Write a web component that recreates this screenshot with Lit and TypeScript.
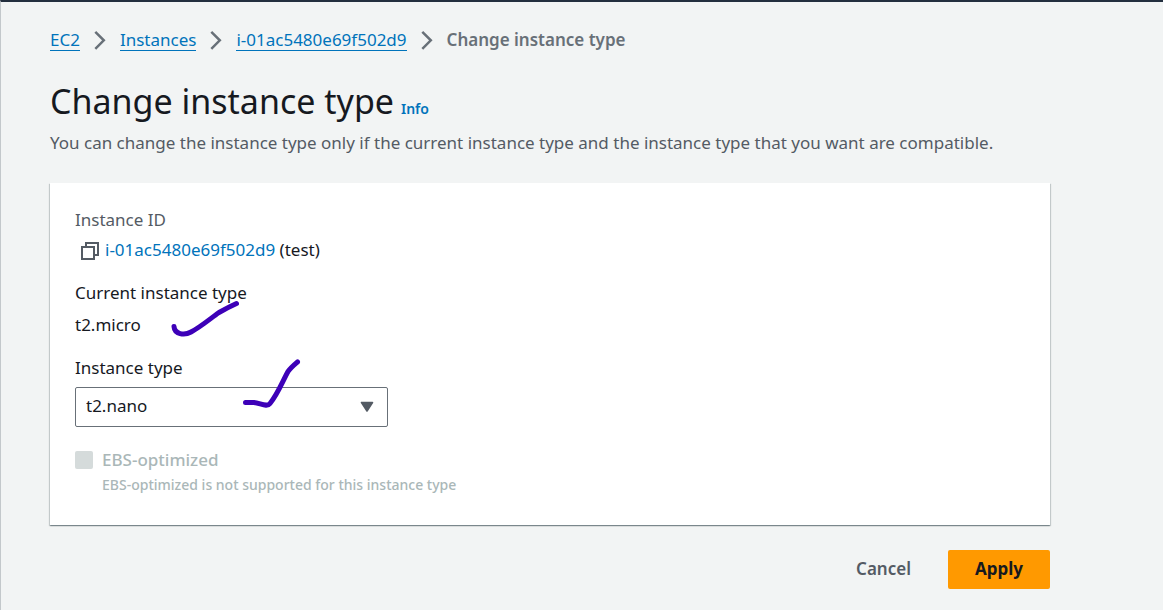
import { LitElement, html, css } from "lit";
import { customElement, state } from "lit/decorators.js";

const chevron = html`<svg class="chevron" viewBox="0 0 12 20" aria-hidden="true">
  <path d="M1.300 1.800L9.800 10.300L1.300 18.800" fill="none" stroke="currentColor" stroke-width="2.500" />
</svg>`;

@customElement("app-root")
export class AppRoot extends LitElement {
  static styles = css`
    :host {
      display: block;
      box-sizing: border-box;
      min-height: 100vh;
      padding: 26px 49px 20px;
      border-top: 2px solid #232f3e;
      border-left: 1px solid #c3c8cb;
      background: #f2f4f4;
      color: #16191f;
      font-family: "Noto Sans", "Open Sans", sans-serif;
      font-size: 17px;
      line-height: 24px;
    }
    main {
      max-width: 1000px;
    }
    a {
      color: #0073bb;
      text-decoration: none;
    }
    .crumbs {
      display: flex;
      align-items: center;
      gap: 14px;
      margin: 0;
      padding: 0;
      list-style: none;
    }
    .crumbs li {
      display: flex;
      align-items: center;
      gap: 14px;
    }
    .crumbs a {
      line-height: 21px;
      border-bottom: 1px solid #0073bb;
    }
    .chevron {
      width: 12px;
      height: 20px;
      color: #687078;
    }
    .current {
      color: #687078;
      font-weight: 600;
    }
    .heading {
      display: flex;
      align-items: baseline;
      gap: 7px;
      margin-top: 25px;
    }
    h1 {
      margin: 0;
      font-size: 34px;
      font-weight: 400;
      line-height: 48px;
    }
    .info {
      font-size: 14px;
      font-weight: 600;
    }
    .intro {
      margin: 6px 0 0;
      color: #545b64;
    }
    .card {
      position: relative;
      margin-top: 28px;
      padding: 25px 25px 28px;
      background: #fff;
      box-shadow: 0 1px 1px 0 rgba(0, 28, 36, 0.3), 1px 1px 1px 0 rgba(0, 28, 36, 0.15),
        -1px 1px 1px 0 rgba(0, 28, 36, 0.15);
    }
    .muted {
      color: #545b64;
    }
    .id-row {
      display: flex;
      align-items: center;
      gap: 5px;
      margin-top: 6px;
    }
    .copy {
      display: flex;
      padding: 2px 0 0 6px;
      border: 0;
      background: none;
      color: #545b64;
    }
    .copy svg {
      width: 19px;
      height: 18px;
    }
    .group {
      margin-top: 19px;
    }
    .value {
      margin-top: 8px;
    }
    .select {
      display: grid;
      max-width: 313px;
      margin-top: 7px;
      align-items: center;
    }
    .select > * {
      grid-area: 1 / 1;
    }
    select {
      appearance: none;
      width: 100%;
      height: 40px;
      padding: 0 40px 2px 10px;
      border: 1px solid #687078;
      border-radius: 2px;
      background: #fff;
      color: inherit;
      font: inherit;
    }
    .arrow {
      justify-self: end;
      width: 14px;
      height: 12px;
      margin-right: 14px;
      pointer-events: none;
    }
    .option {
      display: grid;
      grid-template-columns: 18px 1fr;
      column-gap: 9px;
      align-items: center;
      margin-top: 21px;
      color: #aab7b8;
    }
    .option input {
      appearance: none;
      width: 18px;
      height: 18px;
      margin: 0;
      border-radius: 2px;
      background: #d5dbdb;
    }
    .option label {
      font-weight: 500;
    }
    .hint {
      grid-column: 2;
      margin: 1px 0 0;
      font-size: 14px;
      font-weight: 500;
    }
    .ink {
      position: absolute;
      left: 120px;
      top: 112px;
      width: 140px;
      height: 120px;
      pointer-events: none;
    }
    .actions {
      display: flex;
      justify-content: flex-end;
      gap: 10px;
      margin-top: 25px;
    }
    .actions button {
      height: 39px;
      padding: 0 27px 1px;
      border: 0;
      border-radius: 2px;
      background: none;
      color: #545b64;
      font: inherit;
      font-weight: 600;
    }
    .actions .primary {
      background: #ff9900;
      color: #16191f;
      font-weight: 700;
    }
  `;

  @state() private instanceType = "t2.nano";

  private onType(e: Event) {
    this.instanceType = (e.target as HTMLSelectElement).value;
  }

  render() {
    return html`<main>
      <nav aria-label="Breadcrumbs">
        <ol class="crumbs">
          <li><a href="#">EC2</a>${chevron}</li>
          <li><a href="#">Instances</a>${chevron}</li>
          <li><a href="#">i-01ac5480e69f502d9</a>${chevron}</li>
          <li class="current">Change instance type</li>
        </ol>
      </nav>
      <div class="heading">
        <h1>Change instance type</h1>
        <a class="info" href="#">Info</a>
      </div>
      <p class="intro">
        You can change the instance type only if the current instance type and the instance type that you want are compatible.
      </p>
      <section class="card">
        <div class="muted">Instance ID</div>
        <div class="id-row">
          <button class="copy" type="button" aria-label="Copy">
            <svg viewBox="0 0 19 18" fill="none" stroke="currentColor" stroke-width="2">
              <path d="M1 5H13V17H1Z M5 5V1H17V13H13" />
            </svg>
          </button>
          <span><a href="#">i-01ac5480e69f502d9</a> (test)</span>
        </div>
        <div class="group">
          <div>Current instance type</div>
          <div class="value">t2.micro</div>
        </div>
        <div class="group">
          <label for="type">Instance type</label>
          <div class="select">
            <select id="type" .value=${this.instanceType} @change=${this.onType}>
              <option>t2.nano</option>
            </select>
            <svg class="arrow" viewBox="0 0 14 12" aria-hidden="true">
              <path d="M1.500 1.500H12.500L7 10Z" fill="#545b64" stroke="#545b64" stroke-width="1.600" stroke-linejoin="round" />
            </svg>
          </div>
        </div>
        <div class="option">
          <input id="ebs" type="checkbox" disabled aria-describedby="ebs-hint" />
          <label for="ebs">EBS-optimized</label>
          <p class="hint" id="ebs-hint">EBS-optimized is not supported for this instance type</p>
        </div>
        <svg class="ink" viewBox="170 295 140 120" aria-hidden="true" fill="none" stroke="#3d00b8" stroke-width="5" stroke-linecap="round" stroke-linejoin="round">
          <path d="M174 326.500C174.500 334 184 336 191 332C202 326 211 318 219 312.500C226 308.500 231 306 236.500 303.500" />
          <path d="M245.500 402.500H254C260 403 267 407.500 270 403.500C278 393.500 282.500 381.500 288 371.500C291 367.500 294 365 297.500 362" />
        </svg>
      </section>
      <div class="actions">
        <button type="button">Cancel</button>
        <button class="primary" type="button">Apply</button>
      </div>
    </main>`;
  }
}
